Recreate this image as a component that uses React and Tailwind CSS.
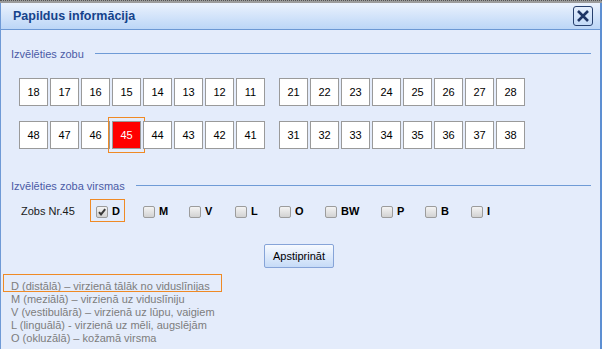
import React from "react";

const r1a = [18, 17, 16, 15, 14, 13, 12, 11];
const r1b = [21, 22, 23, 24, 25, 26, 27, 28];
const r2a = [48, 47, 46, 45, 44, 43, 42, 41];
const r2b = [31, 32, 33, 34, 35, 36, 37, 38];

function Tooth({ n }) {
  const sel = n === 45;
  return (
    <div
      className={
        sel
          ? "w-[29px] h-[28px] border border-[#9a9a9a] bg-[#ff0000] text-white text-[11px] flex items-center justify-center outline outline-[#ef8a25] outline-offset-[3px]"
          : "w-[29px] h-[28px] border border-[#9a9a9a] bg-white text-black text-[11px] flex items-center justify-center"
      }
    >
      {n}
    </div>
  );
}

function Row({ a, b }) {
  return (
    <div className="flex">
      <div className="flex gap-[2px]">
        {a.map((n) => (
          <Tooth key={n} n={n} />
        ))}
      </div>
      <div className="flex gap-[2px] ml-[14px]">
        {b.map((n) => (
          <Tooth key={n} n={n} />
        ))}
      </div>
    </div>
  );
}

function Box({ checked }) {
  return (
    <span className="w-[12px] h-[12px] rounded-[2px] border border-[#9c9c9c] bg-linear-to-b from-[#f4f4f4] to-[#d2d2d2] flex items-center justify-center shrink-0">
      {checked && (
        <svg width="10" height="10" viewBox="0 0 10 10">
          <path d="M2 5.2 L4 7.4 L8.2 2.2" fill="none" stroke="#3a3a3a" strokeWidth="2" />
        </svg>
      )}
    </span>
  );
}

function Item({ label, w, checked }) {
  return (
    <div className={"relative flex items-center h-[13px] " + w}>
      {checked && (
        <span className="absolute left-[-6px] top-[-6px] w-[35px] h-[23px] border border-[#ef8a25]" />
      )}
      <Box checked={checked} />
      <span className="ml-[4px] text-[11px] font-bold text-black leading-[13px]">{label}</span>
    </div>
  );
}

function Header({ text, mt }) {
  return (
    <div className={"flex items-center h-[13px] pl-[10px] pr-[9px] " + mt}>
      <span className="text-[11px] leading-[13px] text-[#4b5ba6]">{text}</span>
      <div className="flex-1 ml-[11px] h-px bg-[#6f9bd6] mb-[2px]" />
    </div>
  );
}

export default function App() {
  return (
    <div className="w-[602px] h-[349px] overflow-hidden font-['Liberation_Sans',Arial,sans-serif] flex flex-col">
      <div className="h-[3px] bg-[#9b9b9b] border-t border-dotted border-[#555]" />
      <div className="flex-1 flex flex-col border-l border-l-[#6f9ad6] border-r-2 border-r-[#5d8fd2] bg-[#e4ecfb]">
        <div className="h-[26px] shrink-0 flex items-center justify-between pl-[12px] pr-[7px] bg-linear-to-b from-[#ebf2fd] to-[#bcd6f7]">
          <span className="text-[12.5px] font-bold text-[#15428b]">Papildus informācija</span>
          <div className="w-[20px] h-[20px] border border-[#27406e] rounded-[3px] flex items-center justify-center">
            <svg width="14" height="14" viewBox="0 0 14 14">
              <path d="M2 2 L12 12 M12 2 L2 12" stroke="#1d3465" strokeWidth="2.6" />
            </svg>
          </div>
        </div>
        <div className="h-px bg-[#6c98d4] shrink-0" />
        <div className="flex flex-col pt-[18px]">
          <Header text="Izvēlēties zobu" mt="" />
          <div className="mt-[17px] pl-[18px] flex flex-col gap-[15px]">
            <Row a={r1a} b={r1b} />
            <Row a={r2a} b={r2b} />
          </div>
          <Header text="Izvēlēties zoba virsmas" mt="mt-[31px]" />
          <div className="mt-[7px] h-[23px] flex items-center pl-[20px]">
            <span className="w-[75px] text-[11px] text-[#1a1a1a]">Zobs Nr.45</span>
            <Item label="D" w="w-[47px]" checked />
            <Item label="M" w="w-[46px]" />
            <Item label="V" w="w-[46px]" />
            <Item label="L" w="w-[44px]" />
            <Item label="O" w="w-[46px]" />
            <Item label="BW" w="w-[56px]" />
            <Item label="P" w="w-[44px]" />
            <Item label="B" w="w-[46px]" />
            <Item label="I" w="w-[30px]" />
          </div>
          <div className="mt-[21px] flex">
            <button className="ml-[263px] w-[70px] h-[24px] border border-[#86a4d8] rounded-[2px] bg-linear-to-b from-[#f7faff] to-[#c6dbf7] text-[11px] text-black">
              Apstiprināt
            </button>
          </div>
          <div className="mt-[12px] pl-[10px] text-[11px] leading-[13px] text-[#7d7d7d]">
            <div className="relative">
              <span className="absolute left-[-8px] top-[-6px] w-[219px] h-[18px] border border-[#ef8a25]" />
              D (distālā) – virzienā tālāk no viduslīnijas
            </div>
            <div>M (meziālā) – virzienā uz viduslīniju</div>
            <div>V (vestibulārā) – virzienā uz lūpu, vaigiem</div>
            <div>L (linguālā) - virzienā uz mēli, augslējām</div>
            <div>O (okluzālā) – kožamā virsma</div>
          </div>
        </div>
      </div>
    </div>
  );
}
